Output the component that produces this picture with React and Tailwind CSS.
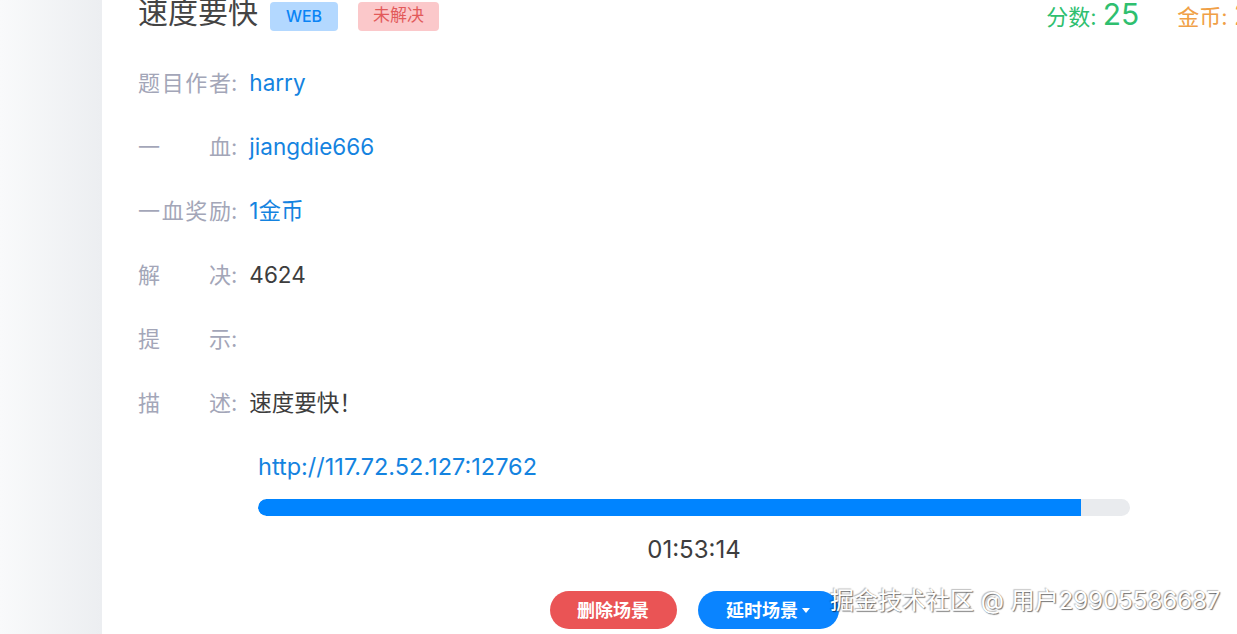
import React from "react";

const FONT = { fontFamily: 'Inter, "Noto Sans CJK SC", sans-serif' };

const rows = [
  { label: "题目作者", value: "harry", tone: "link" },
  { label: "一血", value: "jiangdie666", tone: "link" },
  { label: "一血奖励", value: "1金币", tone: "link" },
  { label: "解决", value: "4624", tone: "plain" },
  { label: "提示", value: "", tone: "plain" },
  { label: "描述", value: "速度要快！", tone: "plain" },
];

function InfoRow({ label, value, tone }) {
  return (
    <div className="flex items-center h-16 text-[22px]">
      <span className="flex items-center text-[#a3a6b8]">
        <span className="inline-block w-[93px] text-justify [text-align-last:justify]">{label}</span>
        <span>:</span>
      </span>
      <span className={`ml-[12px] text-[22.5px] ${tone === "link" ? "text-[#1483e0]" : "text-[#3d3d3d]"}`}>{value}</span>
    </div>
  );
}

export default function App() {
  const progress = 94.4;

  return (
    <div className="relative w-[1237px] h-[634px] overflow-hidden flex bg-white" style={FONT}>
      <div className="w-[102px] shrink-0 bg-linear-to-r from-[#f9fafb] to-[#eceef1]" />

      <div className="w-[1200px] shrink-0 bg-white pl-[36px]">
        {/* title */}
        <div className="flex items-center h-[36px] -mt-[4px]">
          <h1 className="text-[30px] leading-none text-[#444] whitespace-nowrap -mt-[4px]">速度要快</h1>
          <span className="ml-[12px] h-[29px] w-[68px] rounded-[4px] bg-[#b3d8ff] text-[#0a84f5] text-[16px] font-medium flex items-center justify-center mt-[4px]">
            WEB
          </span>
          <span className="ml-[20px] h-[29px] w-[81px] rounded-[4px] bg-[#fbc8ca] text-[#e25a5a] text-[17px] flex items-center justify-center mt-[4px]">
            未解决
          </span>
          <div className="ml-auto flex items-baseline gap-[38px] pr-[31px] shrink-0 whitespace-nowrap">
            <span className="text-[#2fbf6f] text-[22px]">
              分数: <span className="text-[30px]">25</span>
            </span>
            <span className="text-[#f0a046] text-[22px]">
              金币: <span className="text-[30px]">20</span>
            </span>
          </div>
        </div>

        <div className="mt-[19px]">
          {rows.map((r) => (
            <InfoRow key={r.label} {...r} />
          ))}
        </div>

        {/* scene */}
        <div className="ml-[120px] w-[872px]">
          <div className="h-16 flex items-center text-[23.5px] text-[#1483e0]">http://117.72.52.127:12762</div>
          <div className="h-[17px] rounded-full bg-[#e9ebee] overflow-hidden">
            <div className="h-full bg-[#0084ff] rounded-l-full" style={{ width: `${progress}%` }} />
          </div>
          <div className="mt-[18px] text-center text-[24px] leading-[32px] text-[#3d3d3d]">01:53:14</div>
          <div className="mt-[25px] flex justify-center gap-[21px]">
            <button className="h-[38px] w-[127px] rounded-full bg-[#ea5455] text-white text-[18px] font-bold">
              删除场景
            </button>
            <button className="h-[38px] w-[141px] rounded-full bg-[#0a84ff] text-white text-[18px] font-bold flex items-center justify-center gap-[4px]">
              延时场景
              <span className="inline-block w-0 h-0 border-l-[4px] border-r-[4px] border-t-[5px] border-l-transparent border-r-transparent border-t-white" />
            </button>
          </div>
        </div>
      </div>

      <div className="absolute left-[830px] top-[583px] text-[24px] text-white [text-shadow:1px_1px_1px_rgba(0,0,0,0.55),-1px_-1px_1px_rgba(0,0,0,0.25)] whitespace-nowrap">
        掘金技术社区 @ 用户29905586687
      </div>
    </div>
  );
}
